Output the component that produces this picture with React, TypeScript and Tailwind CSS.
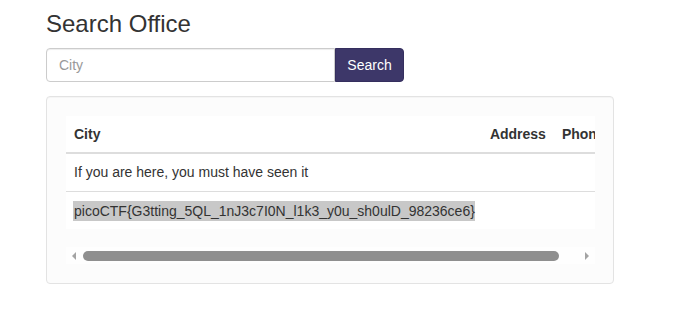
import React from "react";

export default function App() {
  const font = { fontFamily: '"Liberation Sans", Arial, Helvetica, sans-serif' };
  return (
    <div className="min-h-[313px] w-[681px] bg-white text-[#333] text-[14px] leading-5" style={font}>
      <div className="pl-[46px] pt-[11px] w-[614px]">
        <h3 className="text-[24px] leading-[26px] font-normal text-[#333]">Search Office</h3>
        <div className="mt-[11px] flex h-[34px] w-[358px]">
          <div className="flex-1 flex items-center border border-[#ccc] rounded-l-[4px] px-[12px] text-[#999] bg-white shadow-[inset_0_1px_1px_rgba(0,0,0,0.075)]">
            City
          </div>
          <button className="w-[69px] h-[34px] bg-[#3d3769] text-white rounded-r-[4px] text-[14px] border border-[#352f5e]">
            Search
          </button>
        </div>
        <div className="mt-[14px] border border-[#e3e3e3] rounded-[4px] bg-[#fcfcfc] px-[19px] pt-[19px] pb-[19px] shadow-[inset_0_1px_1px_rgba(0,0,0,0.03)]">
          <div className="overflow-hidden w-[529px]">
            <table className="w-[548px] border-collapse bg-white">
              <thead>
                <tr className="border-b-2 border-[#ddd]">
                  <th className="text-left font-bold p-[8px] whitespace-nowrap">City</th>
                  <th className="text-left font-bold p-[8px] whitespace-nowrap w-[71px]">Address</th>
                  <th className="text-left font-bold p-[8px] whitespace-nowrap w-[61px]">Phone</th>
                </tr>
              </thead>
              <tbody>
                <tr className="border-b border-[#ddd]">
                  <td className="px-[8px] py-[8px] leading-[21px] whitespace-nowrap">If you are here, you must have seen it</td>
                  <td className="p-[8px]"></td>
                  <td className="p-[8px]"></td>
                </tr>
                <tr>
                  <td className="px-[7px] py-[8px] leading-[21px] whitespace-nowrap">
                    <span className="inline-block bg-[#c8c8c8] leading-5 pl-[1px] align-middle">
                      picoCTF{"{"}G3tting_5QL_1nJ3c7I0N_l1k3_y0u_sh0ulD_98236ce6{"}"}
                    </span>
                  </td>
                  <td className="p-[8px]"></td>
                  <td className="p-[8px]"></td>
                </tr>
              </tbody>
            </table>
            <div className="mt-[18px] h-[17px] flex items-center bg-[#fefefe]">
              <div className="w-[14px] flex justify-center">
                <div className="w-0 h-0 border-y-[4px] border-y-transparent border-r-[4px] border-r-[#a3a3a3] ml-[2px]" />
              </div>
              <div className="ml-[3px] w-[476px] h-[10px] rounded-full bg-[#8f8f8f]" />
              <div className="flex-1 flex justify-end pr-[6px]">
                <div className="w-0 h-0 border-y-[4px] border-y-transparent border-l-[4px] border-l-[#a3a3a3]" />
              </div>
            </div>
          </div>
        </div>
      </div>
    </div>
  );
}
